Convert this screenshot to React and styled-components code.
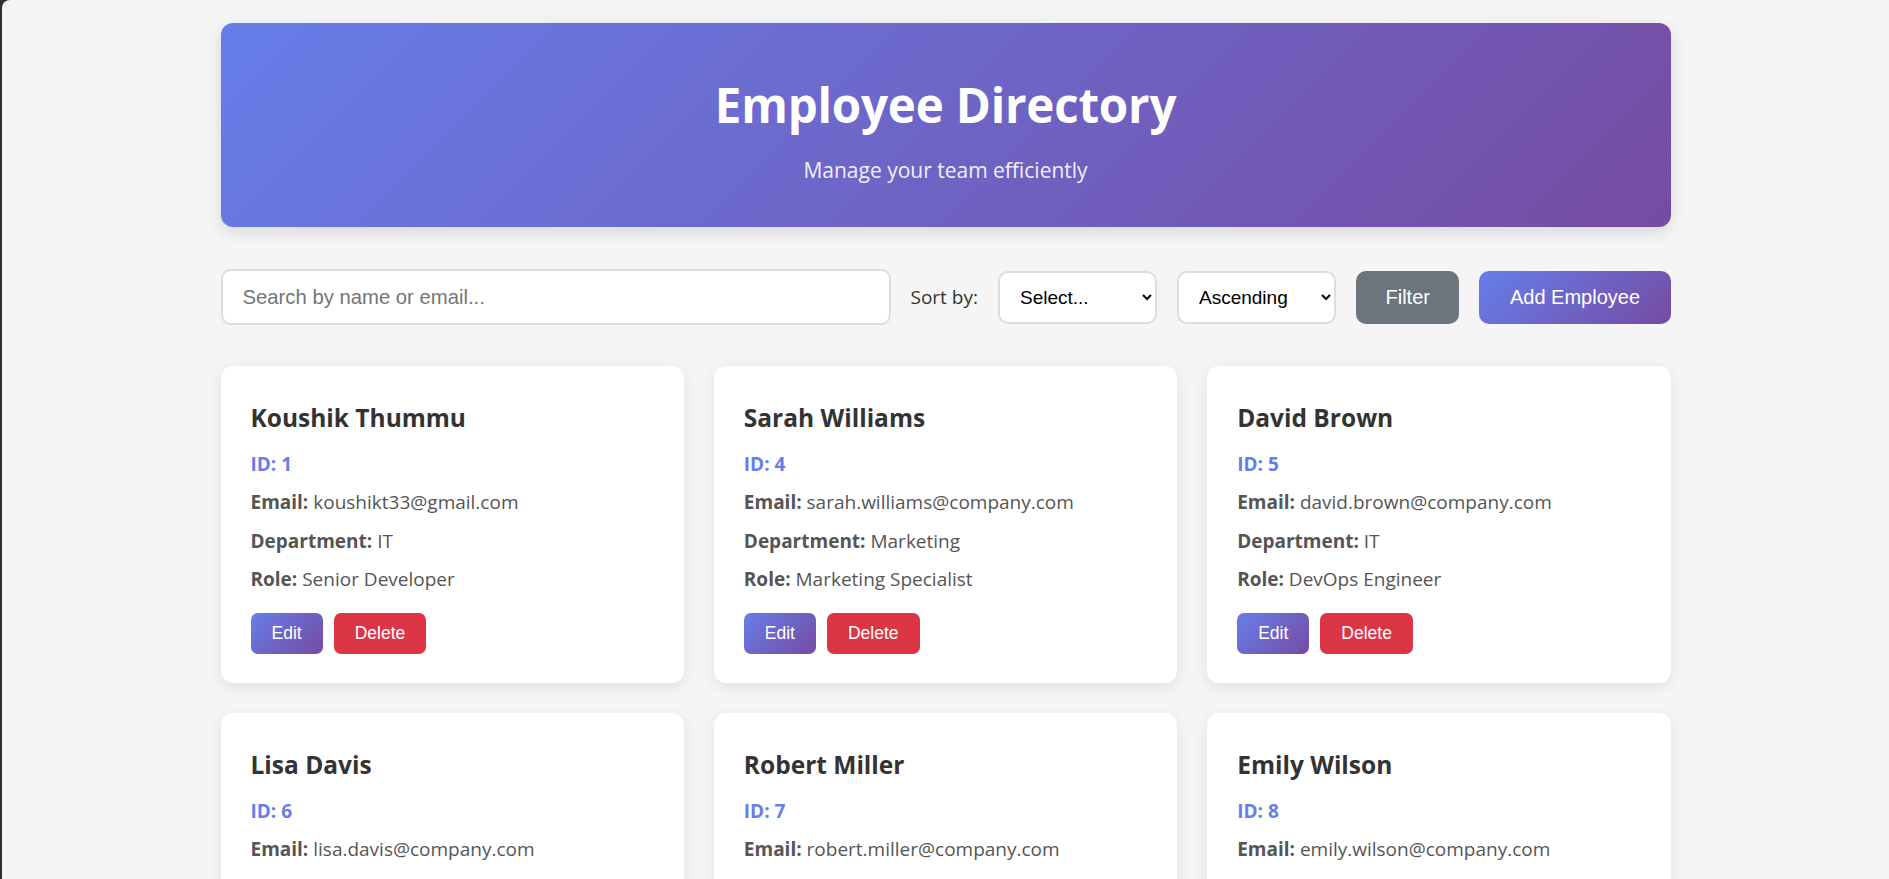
import React, { useState } from "react";
import styled, { createGlobalStyle } from "styled-components";

const GlobalStyle = createGlobalStyle`
  html {
    background: #2e2e2e;
  }
  body {
    margin: 0 0 0 2px;
    min-height: 100vh;
    background: #f5f5f5;
    border-top-left-radius: 8px;
    font-family: "Open Sans", "Noto Sans", sans-serif;
    color: #333;
  }
  * {
    box-sizing: border-box;
  }
`;

const Page = styled.div`
  max-width: 1450px;
  margin: 0 auto;
  padding: 23px 0 40px;
`;

const Header = styled.header`
  background: linear-gradient(135deg, #667eea 0%, #764ba2 100%);
  border-radius: 12px;
  box-shadow: 0 5px 16px rgba(0, 0, 0, 0.12);
  color: #fff;
  text-align: center;
  padding: 50px 40px 43px;

  h1 {
    margin: 0 0 19px;
    font-size: 47.5px;
    line-height: 64px;
    font-weight: 700;
    letter-spacing: -0.2px;
  }

  p {
    margin: 0;
    font-size: 21px;
    line-height: 28px;
    opacity: 0.9;
  }
`;

const Toolbar = styled.div`
  display: flex;
  align-items: center;
  gap: 20px;
  margin: 42px 0 41px;
`;

const SearchInput = styled.input`
  flex: 1;
  height: 56px;
  padding: 0 20px;
  border: 2px solid #ddd;
  border-radius: 10px;
  background: #fff;
  font-family: "Liberation Sans", Arial, sans-serif;
  font-size: 20.3px;
  color: #333;
  outline: none;

  &::placeholder {
    color: #757575;
  }
`;

const SortLabel = styled.label`
  font-size: 19px;
  color: #333;
  white-space: nowrap;
`;

const Select = styled.select`
  width: 159px;
  height: 53px;
  padding: 0 12px 0 16px;
  border: 2px solid #ddd;
  border-radius: 10px;
  background: #fff;
  font-family: "Liberation Sans", Arial, sans-serif;
  font-size: 19px;
  color: #000;
`;

const ActionButton = styled.button`
  height: 53px;
  padding: 0 ${(p) => (p.$primary ? "30.5px" : "29.5px")};
  border: none;
  border-radius: 10px;
  background: ${(p) =>
    p.$primary ? "linear-gradient(135deg, #667eea 0%, #764ba2 100%)" : "#6c757d"};
  color: #fff;
  font-family: "Liberation Sans", Arial, sans-serif;
  font-size: 20px;
  cursor: pointer;
`;

const Grid = styled.div`
  display: grid;
  grid-template-columns: repeat(3, 1fr);
  gap: 30px;
`;

const Card = styled.div`
  background: #fff;
  border-radius: 12px;
  box-shadow: 0 4px 14px rgba(0, 0, 0, 0.09);
  padding: 29px 30px 29px;

  h3 {
    margin: 7px 0 17px;
    font-size: 24.5px;
    line-height: 32px;
    font-weight: 700;
    color: #333;
  }
`;

const Line = styled.p`
  margin: 0 0 12.3px;
  font-size: 19px;
  line-height: 26px;
  color: ${(p) => (p.$accent ? "#667eea" : "#555")};
  font-weight: ${(p) => (p.$accent ? 700 : 400)};

  strong {
    font-weight: 700;
  }
`;

const CardActions = styled.div`
  display: flex;
  gap: 11px;
  margin-top: 21px;
`;

const SmallButton = styled.button`
  height: 41px;
  padding: 0 21px;
  border: none;
  border-radius: 7px;
  background: ${(p) =>
    p.$danger ? "#dc3545" : "linear-gradient(135deg, #667eea 0%, #764ba2 100%)"};
  color: #fff;
  font-family: "Liberation Sans", Arial, sans-serif;
  font-size: 17.5px;
  cursor: pointer;
`;

const employees = [
  { id: 1, name: "Koushik Thummu", email: "koushikt33@gmail.com", department: "IT", role: "Senior Developer" },
  { id: 4, name: "Sarah Williams", email: "sarah.williams@company.com", department: "Marketing", role: "Marketing Specialist" },
  { id: 5, name: "David Brown", email: "david.brown@company.com", department: "IT", role: "DevOps Engineer" },
  { id: 6, name: "Lisa Davis", email: "lisa.davis@company.com", department: "HR", role: "HR Manager" },
  { id: 7, name: "Robert Miller", email: "robert.miller@company.com", department: "Finance", role: "Financial Analyst" },
  { id: 8, name: "Emily Wilson", email: "emily.wilson@company.com", department: "Sales", role: "Sales Representative" },
];

const EmployeeCard = ({ employee }) => (
  <Card>
    <h3>{employee.name}</h3>
    <Line $accent>ID: {employee.id}</Line>
    <Line>
      <strong>Email:</strong> {employee.email}
    </Line>
    <Line>
      <strong>Department:</strong> {employee.department}
    </Line>
    <Line>
      <strong>Role:</strong> {employee.role}
    </Line>
    <CardActions>
      <SmallButton>Edit</SmallButton>
      <SmallButton $danger>Delete</SmallButton>
    </CardActions>
  </Card>
);

const App = () => {
  const [search, setSearch] = useState("");

  return (
    <>
      <GlobalStyle />
      <Page>
        <Header>
          <h1>Employee Directory</h1>
          <p>Manage your team efficiently</p>
        </Header>
        <Toolbar>
          <SearchInput
            placeholder="Search by name or email..."
            value={search}
            onChange={(e) => setSearch(e.target.value)}
          />
          <SortLabel htmlFor="sort">Sort by:</SortLabel>
          <Select id="sort" defaultValue="">
            <option value="">Select...</option>
            <option value="firstName">First Name</option>
            <option value="department">Department</option>
          </Select>
          <Select defaultValue="asc">
            <option value="asc">Ascending</option>
            <option value="desc">Descending</option>
          </Select>
          <ActionButton>Filter</ActionButton>
          <ActionButton $primary>Add Employee</ActionButton>
        </Toolbar>
        <Grid>
          {employees.map((e) => (
            <EmployeeCard key={e.id} employee={e} />
          ))}
        </Grid>
      </Page>
    </>
  );
};

export default App;
